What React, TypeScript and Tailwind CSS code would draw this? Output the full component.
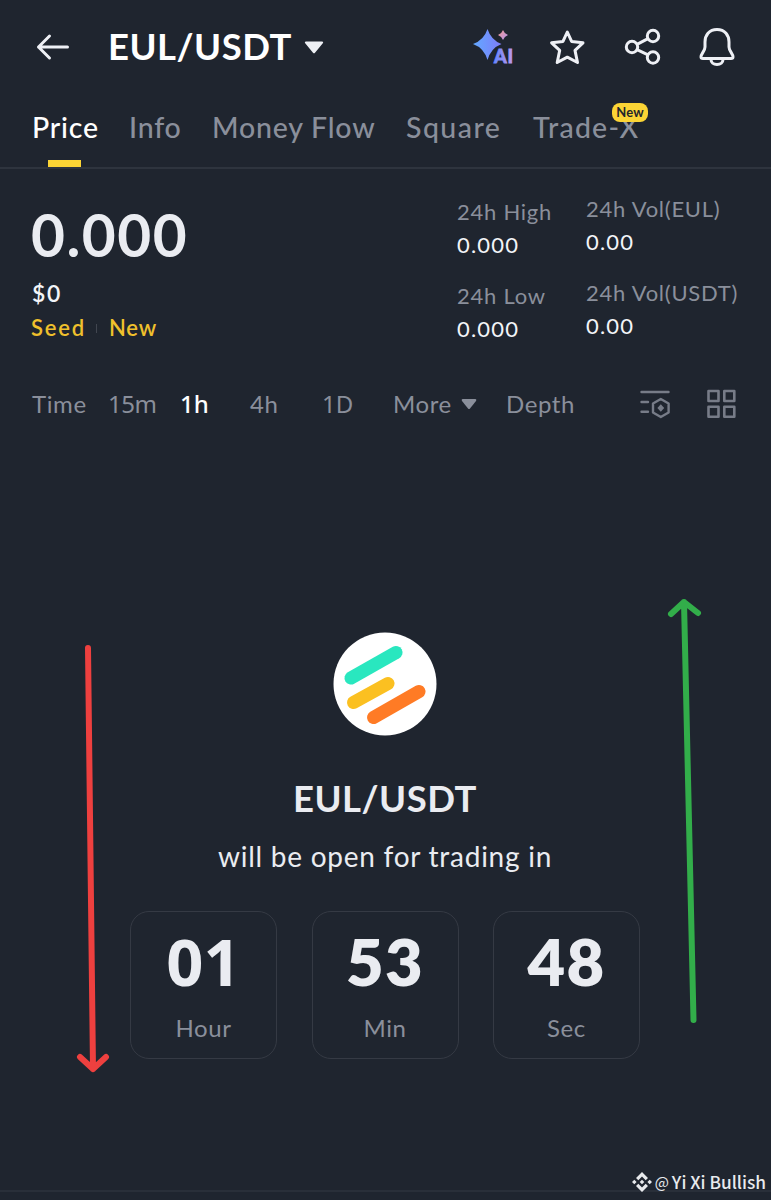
import { ReactNode } from "react";

const LATO = "font-['Lato','Noto_Sans',sans-serif]";
const NOTO = "font-['Noto_Sans',sans-serif]";

function Stat({ label, value }: { label: string; value: string }) {
  return (
    <div className="flex h-[84px] flex-col whitespace-nowrap text-[22px]">
      <span className="h-[33px] leading-[33px] tracking-[0.75px] text-[#8a8f9b]">{label}</span>
      <span className="h-[33px] leading-[33px] tracking-[1.2px] text-[#f2f4f8]">{value}</span>
    </div>
  );
}

function Unit({ value, label }: { value: ReactNode; label: string }) {
  return (
    <div className="flex h-[147.5px] w-[147px] flex-col items-center rounded-[19px] border border-[#353a44]">
      <span className="mt-[16px] h-[66px] text-[65px] font-extrabold leading-[66px] tracking-[1.4px] text-[#eaecf1]">{value}</span>
      <span className="mt-[19px] h-[30px] text-[24px] leading-[30px] tracking-[0.6px] text-[#8a8f9b]">{label}</span>
    </div>
  );
}

export default function App() {
  return (
    <div className={`relative flex h-[1200px] w-[771px] flex-col overflow-hidden bg-[#1f252f] ${LATO}`}>
      <header className="flex h-[94px] shrink-0 items-center pl-[36px] text-[#eef0f5]">
        <svg width="34" height="28" viewBox="0 0 34 28" className="shrink-0" fill="none" stroke="currentColor" strokeWidth="3" strokeLinecap="round" strokeLinejoin="round">
          <path d="M31.5 14H2.5M13.5 3L2.5 14L13.5 25" />
        </svg>
        <h1 className="mb-[3px] ml-[38px] w-[196px] whitespace-nowrap text-[36.5px] font-bold leading-[44px] tracking-[0.5px] text-white">EUL/USDT</h1>
        <svg width="20" height="13" viewBox="0 0 20 13" className="shrink-0" fill="currentColor">
          <path d="M2 0.5H18Q20 1 18.6 2.6L11 11.8Q10 12.8 9 11.8L1.4 2.6Q0 1 2 0.5Z" />
        </svg>
        <svg width="42" height="40" viewBox="0 0 42 40" className="ml-[149px] shrink-0">
          <defs>
            <linearGradient id="spark" x1="0" y1="0" x2="1" y2="0"><stop stopColor="#62a9ff" /><stop offset="1" stopColor="#7e7cfa" /></linearGradient>
            <linearGradient id="mini" x1="0" y1="0" x2="1" y2="1"><stop stopColor="#f39a8e" /><stop offset="1" stopColor="#b494f4" /></linearGradient>
            <linearGradient id="ai" x1="0" y1="0" x2="1" y2="0"><stop stopColor="#6285ff" /><stop offset="1" stopColor="#c09ae9" /></linearGradient>
          </defs>
          <path d="M14.5 2Q18 13 28.5 17Q18 21 14.5 33Q11 21 0 17Q11 13 14.5 2Z" fill="url(#spark)" />
          <path d="M30 3Q31.3 6.7 35 8Q31.3 9.3 30 13Q28.7 9.3 25 8Q28.7 6.7 30 3Z" fill="url(#mini)" />
          <text x="21" y="35.5" fontSize="18" fontWeight="900" fontFamily="Lato, sans-serif" textLength="19" fill="url(#ai)" stroke="url(#ai)" strokeWidth="0.8">AI</text>
        </svg>
        <svg width="38" height="38" viewBox="0 0 38 38" className="ml-[33px] shrink-0" fill="none" stroke="currentColor" strokeWidth="3" strokeLinejoin="round">
          <path d="M19.3 4L23.6 13.4L35 14.8L27 22.4L29.5 34.5L19.3 29.2L9.2 34.5L11.7 22.4L3.6 14.8L15 13.4Z" />
        </svg>
        <svg width="38" height="38" viewBox="0 0 38 38" className="ml-[38px] shrink-0" fill="none" stroke="currentColor" strokeWidth="3">
          <circle cx="8" cy="19" r="5.7" /><circle cx="29" cy="8" r="5.7" /><circle cx="29" cy="29.5" r="5.7" />
          <path d="M13 16.3L24 10.7M13 21.7L24 26.8" />
        </svg>
        <svg width="38" height="40" viewBox="0 0 38 40" className="ml-[36px] shrink-0" fill="none" stroke="currentColor" strokeWidth="3" strokeLinejoin="round">
          <path d="M19 2.5C11 2.5 7 8.5 7 15V20C7 24 3 26.5 3 30Q3 31.5 5 31.5H33Q35 31.5 35 30C35 26.5 31 24 31 20V15C31 8.5 27 2.5 19 2.5Z" />
          <path d="M13 32.5C13 35.5 15.5 37.5 19 37.5S25 35.5 25 32.5" />
        </svg>
      </header>

      <nav className="flex h-[75px] shrink-0 border-b-2 border-[#2e343e] pl-[32px] text-[28.5px] leading-[36px] font-medium tracking-[0.8px] text-[#8a8f9b] whitespace-nowrap">
        <div className="flex w-[97px] flex-col pt-[15px] text-white">
          <span>Price</span>
          <span className="mt-[15px] ml-[16px] h-[7px] w-[33px] shrink-0 bg-[#fcd535]" />
        </div>
        <span className="w-[83px] pt-[15px]">Info</span>
        <span className="w-[194px] pt-[15px]">Money Flow</span>
        <span className="w-[127px] pt-[15px] tracking-[1.45px]">Square</span>
        <div className="relative pt-[15px] tracking-[1.2px]">
          Trade-X
          <span className="absolute top-[9px] left-[79px] h-[19px] w-[36px] rounded-[8px] bg-[#fcd535] text-center text-[13px] font-bold leading-[19px] tracking-[0.2px] text-[#24262c]">New</span>
        </div>
      </nav>

      <section className="flex h-[191px] shrink-0">
        <div className="flex w-[457px] flex-col pl-[31px] whitespace-nowrap">
          <span className="mt-[30px] h-[70px] text-[58.5px] font-bold leading-[70px] tracking-[1.5px] text-[#eaecf1]">0.000</span>
          <span className="mt-[8px] h-[32px] pl-[1px] text-[23px] font-semibold leading-[32px] tracking-[1.6px] text-[#f2f4f8]">$0</span>
          <div className="mt-[3px] flex h-[32px] items-center text-[22px] font-semibold leading-[32px] tracking-[0.8px] text-[#efc02c]">
            <span className="w-[65px] tracking-[1.8px]">Seed</span>
            <span className="h-[9px] w-px bg-[#414650]" />
            <span className="ml-[12px]">New</span>
          </div>
        </div>
        <div className="w-[129px] pt-[26px]">
          <Stat label="24h High" value="0.000" />
          <Stat label="24h Low" value="0.000" />
        </div>
        <div className="pt-[23px]">
          <Stat label="24h Vol(EUL)" value="0.00" />
          <Stat label="24h Vol(USDT)" value="0.00" />
        </div>
      </section>

      <div className="flex h-[88px] shrink-0 items-center pl-[32px] text-[24px] leading-[32px] tracking-[0.6px] text-[#8a8f9b] whitespace-nowrap">
        <span className="w-[76px]">Time</span>
        <span className={`w-[72px] tracking-[-0.5px] ${NOTO}`}>15m</span>
        <span className={`w-[70px] tracking-[0px] font-medium text-white ${NOTO}`}>1h</span>
        <span className="w-[72px]">4h</span>
        <span className={`w-[71px] tracking-[0px] ${NOTO}`}>1D</span>
        <span className="w-[68px]">More</span>
        <svg width="16" height="11" viewBox="0 0 16 11" className="shrink-0" fill="currentColor"><path d="M1.5 0H14.5Q16 .5 15 2L9 9.5Q8 10.5 7 9.5L1 2Q0 .5 1.5 0Z" /></svg>
        <span className="ml-[29px] w-[134px]">Depth</span>
        <svg width="32" height="30" viewBox="0 0 32 30" className="shrink-0" fill="none" stroke="#777c88" strokeWidth="2.4" strokeLinecap="round" strokeLinejoin="round">
          <path d="M1.5 3H28.5M1.5 13H8M1.5 22.8H8M20.8 10L28.6 14.5V23.5L20.8 28L13 23.5V14.5Z" />
          <path d="M20.8 15.2L24.2 19L20.8 22.8L17.4 19Z" fill="#777c88" stroke="none" />
        </svg>
        <svg width="30" height="30" viewBox="0 0 30 30" className="ml-[35px] shrink-0" fill="none" stroke="#777c88" strokeWidth="2.6" strokeLinejoin="round">
          <path d="M1.5 2H11.5V12H1.5ZM17.3 2H27.3V12H17.3ZM1.5 17.8H11.5V27.8H1.5ZM17.3 17.8H27.3V27.8H17.3Z" />
        </svg>
      </div>

      <main className="flex w-[770px] flex-col items-center pt-[184px]">
        <svg width="104" height="104" viewBox="0 0 104 104" className="shrink-0" strokeWidth="13" strokeLinecap="round">
          <circle cx="52" cy="52" r="51.5" fill="#fff" />
          <path d="M18 46L63 20.5" stroke="#29e7bf" />
          <path d="M20.5 70.5L55 51.5" stroke="#fbc021" />
          <path d="M40.5 85.5L86 59.5" stroke="#ff7b25" />
        </svg>
        <h2 className="mt-[39px] h-[46px] text-[36.5px] font-bold leading-[46px] tracking-[0.5px] text-[#eaecf1]">EUL/USDT</h2>
        <p className="mt-[17px] h-[36px] whitespace-nowrap text-[28px] leading-[36px] tracking-[0.75px] text-[#eaecf1]">will be open for trading in</p>
        <div className="mt-[37px] flex gap-[34.5px]">
          <Unit value={<span className={`font-bold tracking-[0px] ${NOTO}`}>01</span>} label="Hour" />
          <Unit value="53" label="Min" />
          <Unit value="48" label="Sec" />
        </div>
      </main>

      <svg className="pointer-events-none absolute top-[590px] left-0" width="771" height="500" viewBox="0 590 771 500" fill="none" strokeWidth="6" strokeLinecap="round" strokeLinejoin="round">
        <path d="M88 648L93 1069M80 1057L93 1069L106 1057" stroke="#ee403f" />
        <path d="M693.5 1020L684 602M671 614L684 602L698 613" stroke="#32ae4a" />
      </svg>

      <footer className="mt-auto h-[10px] border-t-2 border-[#292f39]" />
      <div className="absolute right-[5px] bottom-[6px] flex h-[24px] items-center whitespace-nowrap font-['Noto_Sans_CJK_SC','Noto_Sans',sans-serif] text-[17.3px] font-medium leading-[24px] text-[#e8eaed]">
        <svg width="20" height="20" viewBox="0 0 20 20" fill="currentColor">
          <path d="M10 0L16 6L13.7 8.3L10 4.6L6.3 8.3L4 6ZM10 20L16 14L13.7 11.7L10 15.4L6.3 11.7L4 14ZM10 7.7L12.3 10L10 12.3L7.7 10ZM2.3 7.7L4.6 10L2.3 12.3L0 10ZM17.7 7.7L20 10L17.7 12.3L15.4 10Z" />
        </svg>
        <span className="ml-[3px] w-[17px] text-[15px] font-normal">@</span>
        <span>Yi Xi Bullish</span>
      </div>
    </div>
  );
}
